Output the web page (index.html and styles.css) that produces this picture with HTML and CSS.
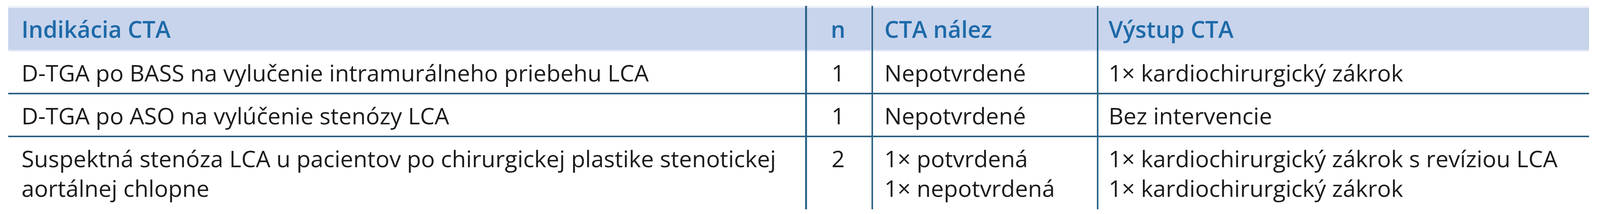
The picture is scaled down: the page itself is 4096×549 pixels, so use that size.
FILE: index.html
```html
<!DOCTYPE html>
<html lang="sk">
<head>
<meta charset="utf-8">
<title>Indikácia CTA</title>
<link rel="stylesheet" href="styles.css">
</head>
<body>
<div class="table">
  <div class="cell head c1">Indikácia CTA</div>
  <div class="cell head c2">n</div>
  <div class="cell head c3">CTA nález</div>
  <div class="cell head c4">Výstup CTA</div>

  <div class="cell c1">D-TGA po BASS na vylučenie intramurálneho priebehu LCA</div>
  <div class="cell c2">1</div>
  <div class="cell c3">Nepotvrdené</div>
  <div class="cell c4">1× kardiochirurgický zákrok</div>

  <div class="cell c1 ruled">D-TGA po ASO na vylúčenie stenózy LCA</div>
  <div class="cell c2 ruled">1</div>
  <div class="cell c3 ruled">Nepotvrdené</div>
  <div class="cell c4 ruled">Bez intervencie</div>

  <div class="cell c1 ruled last">Suspektná stenóza LCA u pacientov po chirurgickej plastike stenotickej<br>aortálnej chlopne</div>
  <div class="cell c2 ruled last">2</div>
  <div class="cell c3 ruled last">1× potvrdená<br>1× nepotvrdená</div>
  <div class="cell c4 ruled last">1× kardiochirurgický zákrok s revíziou LCA<br>1× kardiochirurgický zákrok</div>
</div>
</body>
</html>
```

FILE: styles.css
```css
html, body {
  margin: 0;
  padding: 0;
  background: #ffffff;
}

body {
  font-family: "Open Sans", "Noto Sans", "Liberation Sans", sans-serif;
  font-size: 59px;
  line-height: 76px;
  color: #1b1b1b;
}

.table {
  display: grid;
  grid-template-columns: 2040px 170px 577px 1260px;
  margin: 15px 0 0 21px;
  width: 4047px;
}

.cell {
  box-sizing: border-box;
  padding: 16px 0 14px 0;
  white-space: nowrap;
}

.head {
  font-weight: 600;
  color: #1e6aa8;
  padding: 21px 0 20px 0;
  background: linear-gradient(to bottom, #eef1fb 0, #eef1fb 5px, #c7d4ec 5px, #c7d4ec calc(100% - 4px), #e6ebf8 calc(100% - 4px));
}

.c1 {
  padding-left: 34px;
}

.c2 {
  border-left: 5px solid #2c6487;
  text-align: center;
  padding-right: 6px;
}

.c3 {
  border-left: 4px solid #2c6487;
  padding-left: 29px;
}

.c4 {
  border-left: 4px solid #2c6487;
  padding-left: 26px;
}

.ruled {
  border-top: 4px solid #2b5f81;
}

.last {
  padding-bottom: 17px;
}
```
